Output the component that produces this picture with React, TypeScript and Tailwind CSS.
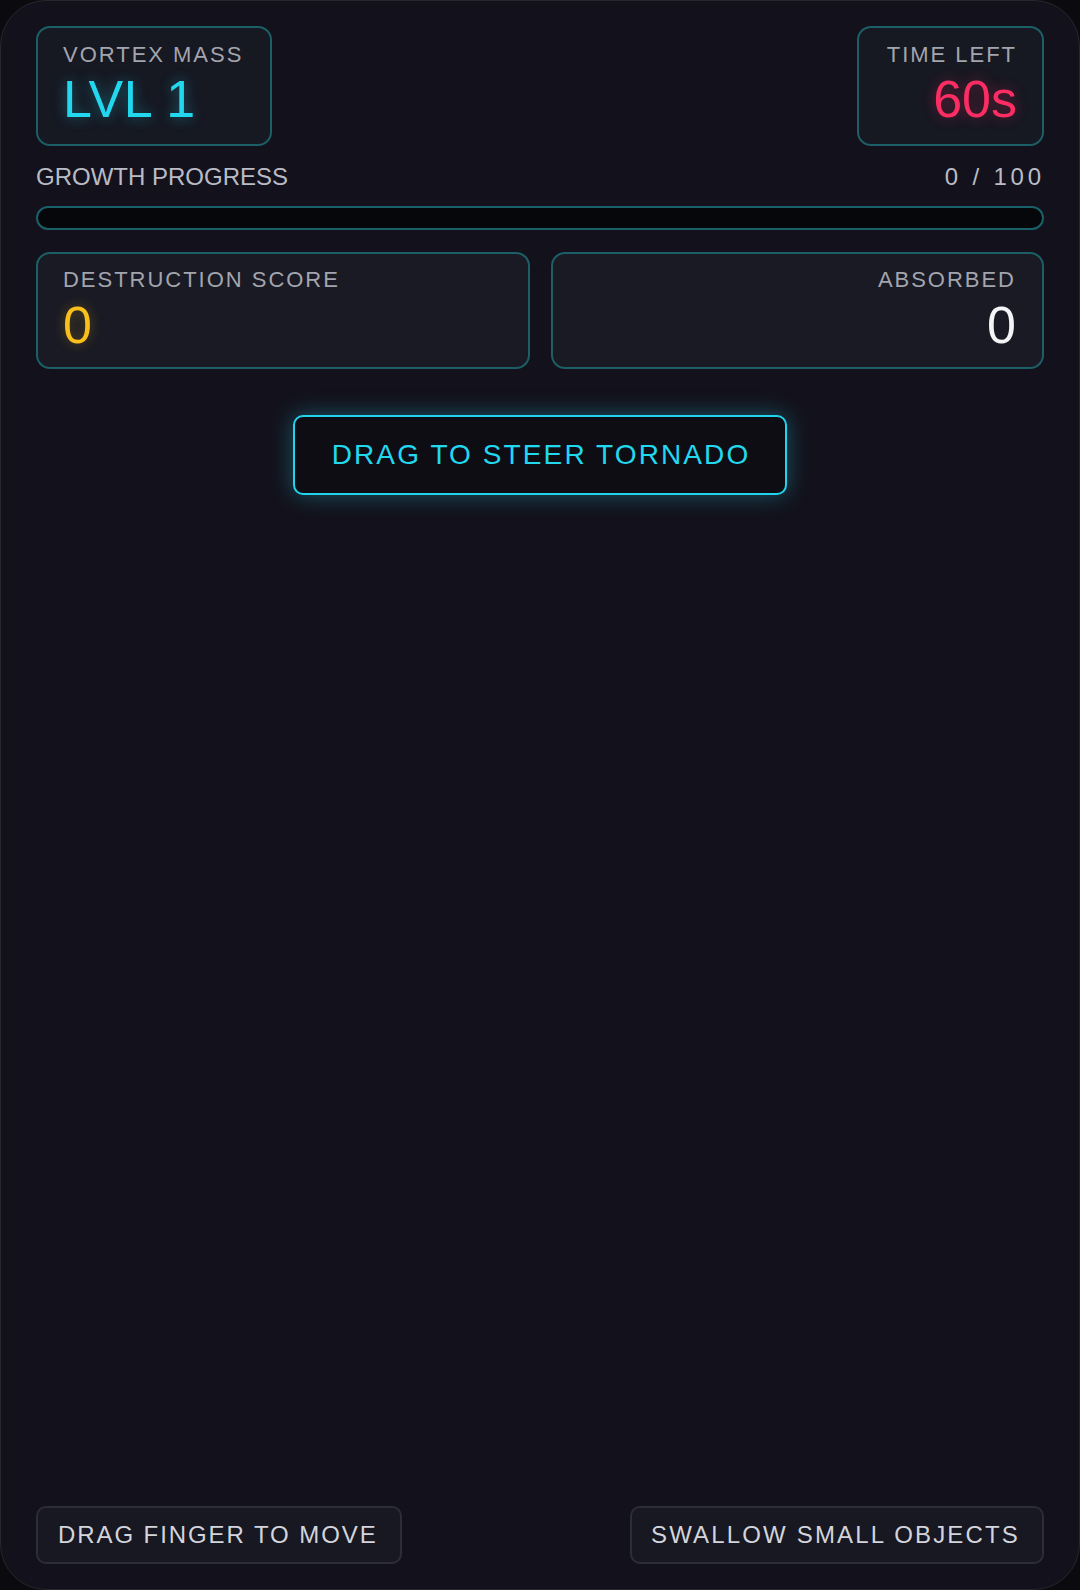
import React from "react";

export default function App() {
  const font = { fontFamily: '"Liberation Sans", Arial, sans-serif' };
  return (
    <div className="w-[1080px] h-[1590px] bg-[#0b0b0f]" style={font}>
      <div className="w-full h-full rounded-[46px] border border-[#26262c] bg-[#13121c] flex flex-col px-[35px] pt-[25px] pb-[25px]">
        {/* Header */}
        <div className="flex justify-between items-start">
          <div className="w-[236px] h-[120px] rounded-[14px] border-2 border-[#1c5f66] bg-[#161822] pl-[25px] pt-[14px] flex flex-col gap-[5px]">
            <div className="text-[22px] leading-[26px] tracking-[0.09em] text-[#a3a5ae]">VORTEX MASS</div>
            <div className="text-[52px] leading-[52px] tracking-[0.01em] text-[#22d8ef] [text-shadow:0_0_14px_rgba(34,216,239,0.45)]">LVL 1</div>
          </div>
          <div className="w-[187px] h-[120px] rounded-[14px] border-2 border-[#1c5f66] bg-[#161822] pr-[25px] pt-[14px] flex flex-col items-end gap-[5px]">
            <div className="text-[22px] leading-[26px] tracking-[0.09em] text-[#a3a5ae]">TIME LEFT</div>
            <div className="text-[52px] leading-[52px] text-[#fb2d62] [text-shadow:0_0_14px_rgba(251,45,98,0.4)]">60s</div>
          </div>
        </div>

        {/* Growth */}
        <div className="mt-[17px] flex justify-between items-center text-[24px] leading-[28px] text-[#b9bcc6]">
          <span>GROWTH PROGRESS</span>
          <span className="tracking-[0.16em] mr-[-1px]">0 / 100</span>
        </div>
        <div className="mt-[15px] h-[24px] rounded-full border-2 border-[#1a6068] bg-[#06070a]" />

        {/* Stats */}
        <div className="mt-[22px] grid grid-cols-2 gap-[21px]">
          <div className="h-[117px] rounded-[14px] border-2 border-[#1c5f66] bg-[#191a24] px-[25px] pt-[13px] flex flex-col gap-[6px]">
            <div className="text-[22px] leading-[26px] tracking-[0.09em] text-[#a3a5ae]">DESTRUCTION SCORE</div>
            <div className="text-[52px] leading-[52px] text-[#fbbf1c] [text-shadow:0_0_12px_rgba(251,191,28,0.35)]">0</div>
          </div>
          <div className="h-[117px] rounded-[14px] border-2 border-[#1c5f66] bg-[#191a24] pr-[26px] pt-[13px] flex flex-col items-end gap-[6px]">
            <div className="text-[22px] leading-[26px] tracking-[0.09em] text-[#a3a5ae]">ABSORBED</div>
            <div className="text-[52px] leading-[52px] text-[#f4f4f6]">0</div>
          </div>
        </div>

        {/* Steer button */}
        <div className="mt-[46px] flex justify-center">
          <div className="w-[494px] h-[80px] rounded-[10px] border-2 border-[#22d3ee] bg-[#0e0d14] shadow-[0_0_22px_rgba(34,211,238,0.35)] flex items-center justify-center">
            <span className="text-[28px] leading-[32px] tracking-[0.075em] text-[#22d8ef] mr-[-2px]">DRAG TO STEER TORNADO</span>
          </div>
        </div>

        {/* Bottom pills */}
        <div className="mt-auto flex justify-between items-center">
          <div className="h-[58px] rounded-[10px] border-2 border-[#2c2d36] bg-[#171821] pl-[20px] pr-[22px] flex items-center">
            <span className="text-[24px] leading-[28px] tracking-[0.08em] text-[#d3d4dc]">DRAG FINGER TO MOVE</span>
          </div>
          <div className="h-[58px] rounded-[10px] border-2 border-[#2c2d36] bg-[#171821] pl-[19px] pr-[22px] flex items-center">
            <span className="text-[24px] leading-[28px] tracking-[0.09em] text-[#d3d4dc]">SWALLOW SMALL OBJECTS</span>
          </div>
        </div>
      </div>
    </div>
  );
}
